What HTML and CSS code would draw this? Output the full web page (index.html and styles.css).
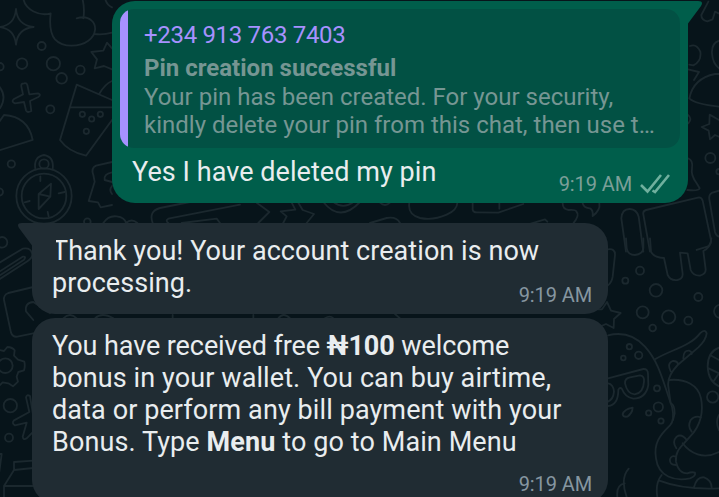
FILE: index.html
```
<!DOCTYPE html>
<html lang="en">
<head>
<meta charset="utf-8">
<title>Chat</title>
<link rel="stylesheet" href="styles.css">
</head>
<body>
<svg class="wallpaper" viewBox="0 0 719 497" aria-hidden="true">
  <g transform="scale(.33333)">
    <path d="M48 27Q52 76 101 81Q52 86 48 134Q44 86 -2 81Q44 76 48 27Z"/>
    <path d="M70 -5C75 30 120 50 152 40C148 75 150 100 165 118C190 145 240 140 265 122C290 105 290 75 275 62C262 50 245 50 230 55M250 55Q255 25 247 -5M284 102Q310 105 336 98M315 -5Q320 15 336 22"/>
    <circle cx="125" cy="138" r="12"/><circle cx="160" cy="191" r="20"/><circle cx="66" cy="191" r="16"/><circle cx="0" cy="200" r="11"/><circle cx="185" cy="235" r="16"/><circle cx="241" cy="210" r="13"/><circle cx="151" cy="328" r="12"/>
    <path d="M336 145L321 128L310 152L274 156L291 178L284 205L312 198L336 208"/>
    <path d="M72 250Q62 250 64 260L69 283L42 297Q32 305 45 310L72 306L78 331Q82 340 94 333L90 303L115 291Q125 284 114 280L88 283L82 255Q80 248 72 250Z"/>
    <path d="M-2 260Q22 290 0 325M-2 365L12 345Q85 350 98 420L-2 451"/>
    <path d="M230 254L336 300M230 254L180 420Q205 455 258 467L336 360M211 322H336M298 281Q315 252 336 243"/>
    <circle cx="247" cy="343" r="8"/><circle cx="275" cy="357" r="8"/><circle cx="301" cy="343" r="8"/><circle cx="259" cy="394" r="8"/>
    <circle cx="34" cy="492" r="11"/><circle cx="132" cy="492" r="14"/><path d="M106 508Q100 470 132 465Q163 470 158 508"/>
    <circle cx="132" cy="588" r="83"/><circle cx="132" cy="588" r="67"/>
    <path d="M153 551L116 582V627L151 590ZM116 582L151 590M121 529V543M176 580L194 576M74 607L89 603M143 636L146 650"/>
    <path d="M336 486L288 497Q272 505 280 525L284 545L266 603L294 607L302 622L336 615M336 517Q310 522 314 540L336 546M336 558Q326 570 336 582"/>
    <circle cx="-2" cy="576" r="11"/><circle cx="262" cy="665" r="10"/>
  </g>
  <g transform="translate(0 210) scale(.33333)">
    <circle cx="6" cy="97" r="16"/>
    <path d="M-5 160L68 116Q92 112 96 130Q100 142 82 154L-5 210M-2 185L68 140Q80 138 72 149L0 196"/>
    <path d="M100 231L25 249Q10 255 12 270L33 368Q38 382 52 380L100 370M100 330L78 304Q74 278 100 276L150 310"/>
    <path d="M-2 420L12 423L22 411Q38 412 44 421L42 437L54 449L73 455Q76 468 72 481L55 486L50 500L54 515L39 529L25 520L8 517L-2 527"/>
    <circle cx="16" cy="467" r="22"/><circle cx="31" cy="587" r="20"/><circle cx="27" cy="683" r="12"/>
    <path d="M100 620L90 558Q80 552 78 562L88 606L42 631Q34 640 45 646L80 638L68 680Q70 692 80 685L100 665"/>
    <path d="M100 752L42 756V780L12 828V865M42 780L100 774M12 828H100M-2 732L5 732L-2 785"/>
    <path d="M190 325Q210 305 230 325M285 325Q305 305 340 325M518 315V325M760 325V315M835 325Q850 305 870 325M975 325Q990 315 1000 325M1200 325L1185 312"/>
  </g>
  <g transform="translate(110 198) scale(.33333)">
    <path d="M-20 75Q-5 52 20 55Q45 58 48 75Q65 60 82 75M128 75Q115 40 150 30L240 12M390 20L175 62Q165 68 175 75M215 75L320 62L330 75M440 14L478 42L445 75M545 14L556 35L512 40L530 55L518 78M565 14L578 36L612 48L590 75M640 12Q690 75 750 12M670 12Q700 35 730 12"/>
  </g>
  <g transform="translate(370 198) scale(.33333)">
    <path d="M30 14Q45 28 60 14M118 14Q112 50 150 60Q190 68 230 50Q262 35 262 14M308 14V35Q310 43 320 43L385 44L460 18M388 14V32M0 75L50 60Q80 55 90 75"/>
  </g>
  <g transform="translate(600 0) scale(.33333)">
    <path d="M325 5L304 45Q304 60 322 64L338 58L345 35L360 42M270 138Q290 130 301 155Q305 185 280 196L268 194M357 122Q334 130 336 160Q338 190 357 205"/>
    <path d="M264 208L297 216L282 240M268 295Q280 235 345 222L357 222M268 295Q285 312 357 320M264 345Q278 356 265 370"/>
    <path d="M357 360L329 344L328 372L305 381L326 392L330 418L345 405L357 410"/><circle cx="331" cy="474" r="15"/><circle cx="357" cy="515" r="8"/>
    <path d="M264 475Q280 480 276 505Q272 525 290 550L299 565Q296 574 262 570"/>
    <path d="M130 643Q128 633 138 630L297 592Q305 592 308 602L333 720Q334 736 322 740L290 750M130 643L150 755M78 755L64 655Q66 626 90 627Q110 628 116 650L130 755M357 572L335 579Q326 584 328 598L345 696Q348 708 357 710"/>
  </g>
  <g transform="translate(600 240) scale(.33333)">
    <path d="M78 -5L80 25Q84 45 105 45Q130 42 130 25V-5M150 -5L153 35Q160 52 192 54L203 105Q212 123 232 120Q248 117 248 102L240 38L263 40L272 90Q280 108 300 107Q318 102 317 88L310 33Q332 22 334 -5M24 28Q46 25 45 45L38 110Q35 128 24 136"/>
    <circle cx="120" cy="92" r="12"/><circle cx="76" cy="122" r="9"/><circle cx="168" cy="151" r="19"/><circle cx="128" cy="217" r="18"/><circle cx="206" cy="231" r="20"/><circle cx="295" cy="171" r="12"/><circle cx="265" cy="242" r="12"/><circle cx="158" cy="264" r="10"/><circle cx="88" cy="320" r="8"/><circle cx="70" cy="354" r="7"/><circle cx="116" cy="346" r="11"/><circle cx="171" cy="445" r="9"/><circle cx="175" cy="501" r="14"/><circle cx="146" cy="519" r="8"/><circle cx="183" cy="543" r="8"/><circle cx="338" cy="471" r="17"/><circle cx="362" cy="214" r="20"/>
    <path d="M21 186L33 212L62 219L42 237L41 264L18 252L-5 262M21 186L6 208L-5 208"/>
    <path d="M24 286Q90 270 135 320C180 370 190 430 216 500Q225 540 210 556C180 585 160 610 168 655C175 710 225 725 270 715Q288 708 285 698Q275 695 262 700Q235 700 228 665C225 630 245 620 270 590C305 555 310 510 303 475C295 435 255 415 207 420"/>
    <path d="M165 358C210 330 270 320 300 280Q315 265 320 280Q318 300 295 322L233 375Q200 410 205 440L212 490M250 355Q250 330 268 332Q278 338 275 342M212 394Q200 370 218 363Q232 362 235 374M213 490Q224 495 224 520L219 540M275 575Q262 560 272 540Q285 525 302 532M229 625Q215 605 230 590Q245 580 260 600M228 675Q208 675 210 658Q214 645 227 650M248 610C270 640 310 660 357 636"/>
    <path d="M24 415L130 387Q144 386 144 402L145 435Q138 475 100 476Q75 472 66 447Q60 440 55 449Q55 495 24 498M24 430Q40 432 42 455Q40 478 24 485M75 430Q74 415 90 412L120 406Q134 408 132 425Q130 460 104 463Q82 462 75 430ZM68 523Q72 508 98 503Q97 520 82 530Q70 532 68 523Z"/>
    <path d="M357 323Q323 335 323 380Q325 425 357 439M330 345L357 360M326 385L357 400M340 425L357 400M86 686Q60 715 80 771M74 730Q48 735 52 771M185 705Q165 730 172 771M178 722Q250 750 357 745M282 742Q290 710 312 712Q334 720 335 742M357 525Q345 545 357 570"/>
  </g>
  <g transform="translate(530 160) scale(.33333)">
    <path d="M98 130Q98 148 116 150Q138 148 140 156Q150 165 130 190M158 130Q162 145 180 145Q190 150 188 168Q212 150 208 130M0 192L45 178L52 185"/>
  </g>
</svg>
<main class="chat">
  <section class="bubble sent">
    <svg class="tail tail-right" viewBox="0 0 38 23" aria-hidden="true"><path d="M0 0H34Q40 0 37 5L24 22.500V23H0Z"/></svg>
    <div class="quote">
      <div class="sender">+234 913 763 7403</div>
      <div class="quoted"><b>Pin creation successful</b><br>Your pin has been created. For your security,<br>kindly delete your pin from this chat, then use t…</div>
    </div>
    <div class="last">
      <p class="text">Yes I have deleted my pin</p>
      <div class="meta"><span class="time">9:19 AM</span><svg class="ticks" viewBox="0 0 30 20" aria-hidden="true"><path d="M1 11L7.500 17.500L21 1M12.500 16.500L15 18L29 1"/></svg></div>
    </div>
  </section>
  <section class="bubble received first">
    <svg class="tail tail-left" viewBox="0 0 38 23" aria-hidden="true"><path d="M38 0H4Q-2 0 1 5L14 22.500V23H38Z"/></svg>
    <p class="text">Thank you! Your account creation is now<br>processing.</p>
    <span class="time">9:19 AM</span>
  </section>
  <section class="bubble received second">
    <p class="text"><span class="lead">You have received free <b>₦100</b> welcome</span><br>bonus in your wallet. You can buy airtime,<br>data or perform any bill payment with your<br>Bonus. Type <b>Menu</b> to go to Main Menu</p>
    <span class="time">9:19 AM</span>
  </section>
</main>
</body>
</html>
```
FILE: styles.css
```
* { box-sizing: border-box; }
body {
  margin: 0;
  width: 719px;
  height: 497px;
  overflow: hidden;
  position: relative;
  background: #07141a;
  font-family: Roboto, "Liberation Sans", sans-serif;
}
.wallpaper {
  position: absolute;
  inset: 0;
  width: 719px;
  height: 497px;
  fill: none;
  stroke: #1b282e;
  stroke-width: 5.5;
  stroke-linejoin: round;
  stroke-linecap: round;
}
.chat {
  position: relative;
  display: flex;
  flex-direction: column;
  padding: 1px 31px 0 32px;
}
.bubble {
  position: relative;
  width: 576px;
  border-radius: 23px;
}
.sent {
  align-self: flex-end;
  height: 202px;
  padding: 8px;
  background: #005e4b;
  border-top-right-radius: 0;
}
.received {
  display: flex;
  flex-direction: column;
  padding: 12px 16px 7px 20px;
  background: #202c33;
}
.first {
  height: 91px;
  margin-top: 20px;
  border-top-left-radius: 0;
}
.second {
  height: 185px;
  margin-top: 4px;
}
.tail {
  position: absolute;
  top: 0;
  width: 38px;
  height: 23px;
}
.tail-right { right: -14px; fill: #005e4b; }
.tail-left { left: -14px; fill: #202c33; }
.quote {
  position: relative;
  height: 139px;
  padding: 12px 16px 0 24px;
  border-radius: 14px;
  background: linear-gradient(to right, #a791ff 8px, #025144 8px);
  white-space: nowrap;
  overflow: hidden;
}
.sender {
  color: #a791ff;
  font-size: 24px;
  letter-spacing: -0.32px;
  line-height: 28px;
}
.quoted {
  margin-top: 5px;
  color: #769693;
  font-size: 24px;
  line-height: 28.500px;
}
.last {
  display: flex;
  justify-content: space-between;
  padding: 8px 10px 0 12px;
}
.text {
  margin: 0;
  color: #e9edef;
  font-size: 27px;
  letter-spacing: 0.06px;
  line-height: 32px;
  white-space: nowrap;
}
.second .text { letter-spacing: 0.1px; }
.second .lead { letter-spacing: -0.09px; }
.meta {
  display: flex;
  align-items: center;
  gap: 8px;
  margin-top: 16px;
  height: 24px;
}
.time {
  color: #8696a0;
  font-size: 20px;
  letter-spacing: -0.1px;
  line-height: 24px;
}
.meta .time { color: #7b9f98; }
.received .time {
  align-self: flex-end;
  margin-top: auto;
}
.received.first .time { margin-top: -16px; }
.ticks {
  width: 30px;
  height: 20px;
  fill: none;
  stroke: #6fb09e;
  stroke-width: 2.6;
}
```
